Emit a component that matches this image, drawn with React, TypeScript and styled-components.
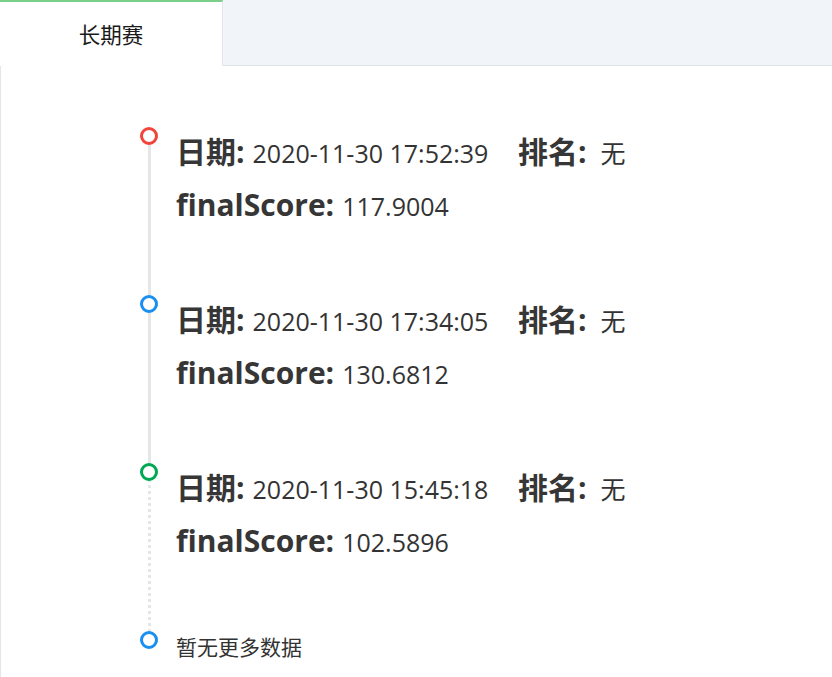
import React from "react";
import styled, { createGlobalStyle } from "styled-components";

const Global = createGlobalStyle`
  html, body { margin: 0; padding: 0; background: #fff; }
  body { font-family: "Open Sans", "Noto Sans CJK SC", sans-serif; color: #333; }
`;

const Card = styled.div`
  width: 832px;
  height: 677px;
  box-sizing: border-box;
  display: flex;
  flex-direction: column;
  overflow: hidden;
`;

const TabBar = styled.div`
  display: flex;
  height: 66px;
  background: #f1f4f9;
  border-bottom: 1px solid #dfe3ea;
  box-sizing: border-box;
  flex-shrink: 0;
`;

const Tab = styled.div<{ $active?: boolean }>`
  width: 223px;
  box-sizing: border-box;
  display: flex;
  align-items: center;
  justify-content: center;
  font-family: "Noto Sans CJK SC", sans-serif;
  font-size: 21.5px;
  color: #1a1a1a;
  background: ${(p) => (p.$active ? "#fff" : "transparent")};
  border-top: 2px solid ${(p) => (p.$active ? "#7ad08a" : "transparent")};
  border-right: 1px solid #e3e6eb;
  margin-bottom: -1px;
  padding-bottom: 2px;
`;

const Body = styled.div`
  flex: 1;
  border-left: 1px solid #e3e6eb;
  padding: 61px 0 0 139px;
`;

const Timeline = styled.ul`
  list-style: none;
  margin: 0;
  padding: 0;
`;

const Item = styled.li<{ $last?: boolean }>`
  display: grid;
  grid-template-columns: 18px 1fr;
  column-gap: 18px;
  padding-bottom: ${(p) => (p.$last ? "0" : "62px")};
  position: relative;
`;

const Rail = styled.div`
  grid-row: 1;
  grid-column: 1;
`;

const Node = styled.span<{ $color: string }>`
  display: block;
  width: 18px;
  height: 18px;
  box-sizing: border-box;
  border-radius: 50%;
  border: 3px solid ${(p) => p.$color};
  background: #fff;
  position: relative;
  z-index: 1;
`;

const Tail = styled.span<{ $dashed?: boolean }>`
  position: absolute;
  left: 8px;
  top: 9px;
  bottom: -9px;
  width: 0;
  border-left: 3px ${(p) => (p.$dashed ? "dotted" : "solid")} #e6e6e6;
`;

const Content = styled.div`
  grid-row: 1;
  grid-column: 2;
`;

const Row = styled.div`
  display: flex;
  align-items: baseline;
  height: 53px;
  line-height: 49px;
  white-space: nowrap;
`;

const Field = styled.span<{ $width?: number }>`
  display: inline-flex;
  align-items: baseline;
  width: ${(p) => (p.$width ? `${p.$width}px` : "auto")};
`;

const Label = styled.b`
  font-size: 30px;
  font-weight: 700;
  color: #363636;
  margin-right: 8px;
`;

const Value = styled.span<{ $cjk?: boolean }>`
  font-size: 25px;
  color: #333;
  margin-left: ${(p) => (p.$cjk ? "6px" : "0")};
`;

const Pending = styled.div`
  font-family: "Noto Sans CJK SC", sans-serif;
  font-size: 21px;
  line-height: 30px;
  color: #333;
`;

const records = [
  { date: "2020-11-30 17:52:39", rank: "无", score: "117.9004", color: "#f0453b" },
  { date: "2020-11-30 17:34:05", rank: "无", score: "130.6812", color: "#1a8ff0" },
  { date: "2020-11-30 15:45:18", rank: "无", score: "102.5896", color: "#00a854" },
];

export default function App() {
  return (
    <>
      <Global />
      <Card>
        <TabBar>
          <Tab $active>长期赛</Tab>
        </TabBar>
        <Body>
          <Timeline>
            {records.map((r, i) => (
              <Item key={i}>
                <Rail>
                  <Node $color={r.color} />
                </Rail>
                <Tail $dashed={i === records.length - 1} />
                <Content>
                  <Row>
                    <Field $width={342}>
                      <Label>日期:</Label>
                      <Value>{r.date}</Value>
                    </Field>
                    <Field>
                      <Label>排名:</Label>
                      <Value $cjk>{r.rank}</Value>
                    </Field>
                  </Row>
                  <Row>
                    <Field>
                      <Label>finalScore:</Label>
                      <Value>{r.score}</Value>
                    </Field>
                  </Row>
                </Content>
              </Item>
            ))}
            <Item $last>
              <Rail>
                <Node $color="#1a8ff0" />
              </Rail>
              <Content>
                <Pending>暂无更多数据</Pending>
              </Content>
            </Item>
          </Timeline>
        </Body>
      </Card>
    </>
  );
}
